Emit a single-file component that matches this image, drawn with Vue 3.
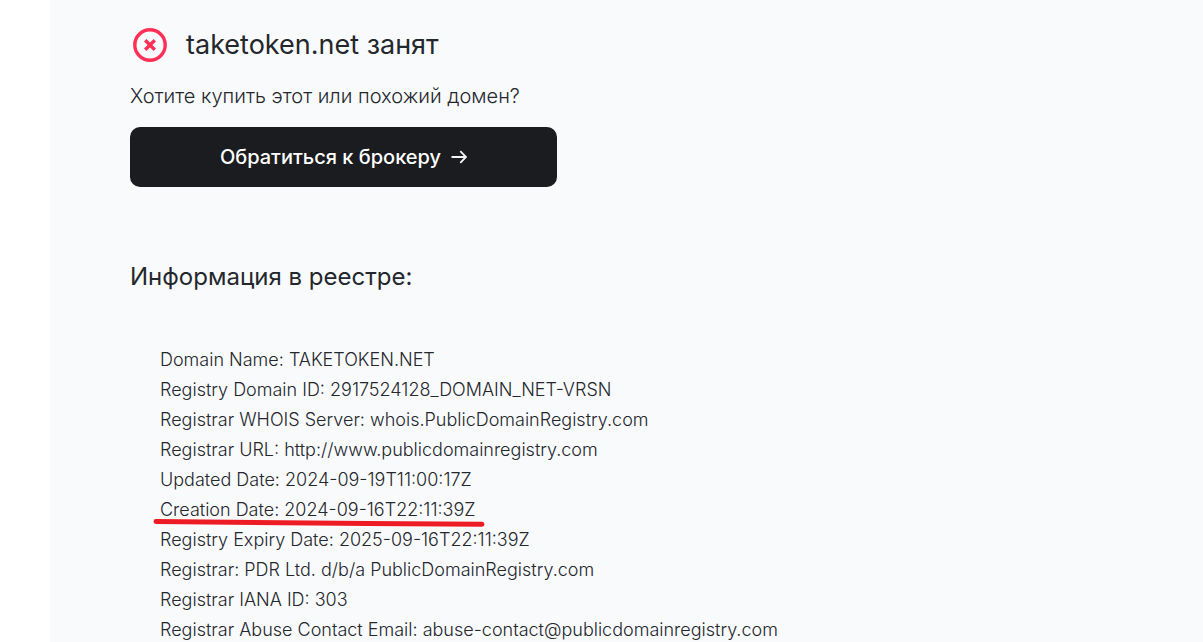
<script setup>
const records = [
  { text: 'Domain Name: TAKETOKEN.NET' },
  { text: 'Registry Domain ID: 2917524128_DOMAIN_NET-VRSN' },
  { text: 'Registrar WHOIS Server: whois.PublicDomainRegistry.com' },
  { text: 'Registrar URL: http://www.publicdomainregistry.com' },
  { text: 'Updated Date: 2024-09-19T11:00:17Z' },
  { text: 'Creation Date: 2024-09-16T22:11:39Z', marked: true },
  { text: 'Registry Expiry Date: 2025-09-16T22:11:39Z' },
  { text: 'Registrar: PDR Ltd. d/b/a PublicDomainRegistry.com' },
  { text: 'Registrar IANA ID: 303' },
  { text: 'Registrar Abuse Contact Email: abuse-contact@publicdomainregistry.com' },
]
</script>

<template>
  <main class="page">
    <header class="status">
      <svg class="cross" viewBox="0 0 40 40" aria-hidden="true">
        <circle cx="20" cy="20" r="15.2" />
        <path d="M15.2 15.2 24.8 24.8M24.8 15.2 15.2 24.8" />
      </svg>
      <h1>taketoken.net занят</h1>
    </header>
    <p class="question">Хотите купить этот или похожий домен?</p>
    <button class="broker" type="button">
      <span>Обратиться к брокеру</span>
      <svg class="arrow" viewBox="0 0 16 16" aria-hidden="true">
        <path d="M0.5 8H15M9.3 2.2 15 8 9.3 13.8" />
      </svg>
    </button>
    <h2>Информация в реестре:</h2>
    <ul class="records">
      <li v-for="record in records" :key="record.text">
        <span class="line">{{ record.text }}<svg v-if="record.marked" class="mark" viewBox="0 0 332 10" aria-hidden="true">
          <path d="M3 3.5C80 3.5 220 6 329 6.2" />
        </svg></span>
      </li>
    </ul>
  </main>
</template>

<style>
body {
  background: #fff;
  overflow: hidden;
}
</style>

<style scoped>
.page {
  margin-left: 50px;
  padding: 25px 80px 0;
  min-height: 100vh;
  box-sizing: border-box;
  background: #f9fafc;
  color: #24272c;
  font-family: Inter, "Liberation Sans", sans-serif;
}
.status {
  display: flex;
  align-items: center;
  gap: 16px;
  height: 40px;
}
.cross {
  width: 40px;
  height: 40px;
  fill: none;
  stroke: #ff2f56;
  stroke-width: 3.4;
}
h1 {
  margin: 0;
  font-size: 27px;
  line-height: 40px;
  font-weight: 400;
}
.question {
  margin: 16px 0;
  font-size: 20px;
  line-height: 30px;
  font-weight: 300;
}
.broker {
  display: flex;
  align-items: center;
  justify-content: center;
  gap: 10px;
  width: 100%;
  max-width: 427px;
  height: 60px;
  padding: 0;
  border: 0;
  border-radius: 10px;
  background: #1b1c20;
  color: #fff;
  font: 500 20px/30px Inter, "Liberation Sans", sans-serif;
}
.arrow {
  width: 16px;
  height: 16px;
  fill: none;
  stroke: #f4f4f4;
  stroke-width: 1.8;
}
h2 {
  margin: 74px 0 0;
  font-size: 24px;
  line-height: 32px;
  font-weight: 400;
}
.records {
  margin: 52px 0 0;
  padding: 0 30px;
  list-style: none;
  font-size: 18px;
  line-height: 30px;
  font-weight: 300;
}
.line {
  position: relative;
}
.mark {
  position: absolute;
  left: -7px;
  bottom: -8px;
  width: 332px;
  height: 10px;
  fill: none;
  stroke: #ed1c24;
  stroke-width: 5;
  stroke-linecap: round;
}
</style>
